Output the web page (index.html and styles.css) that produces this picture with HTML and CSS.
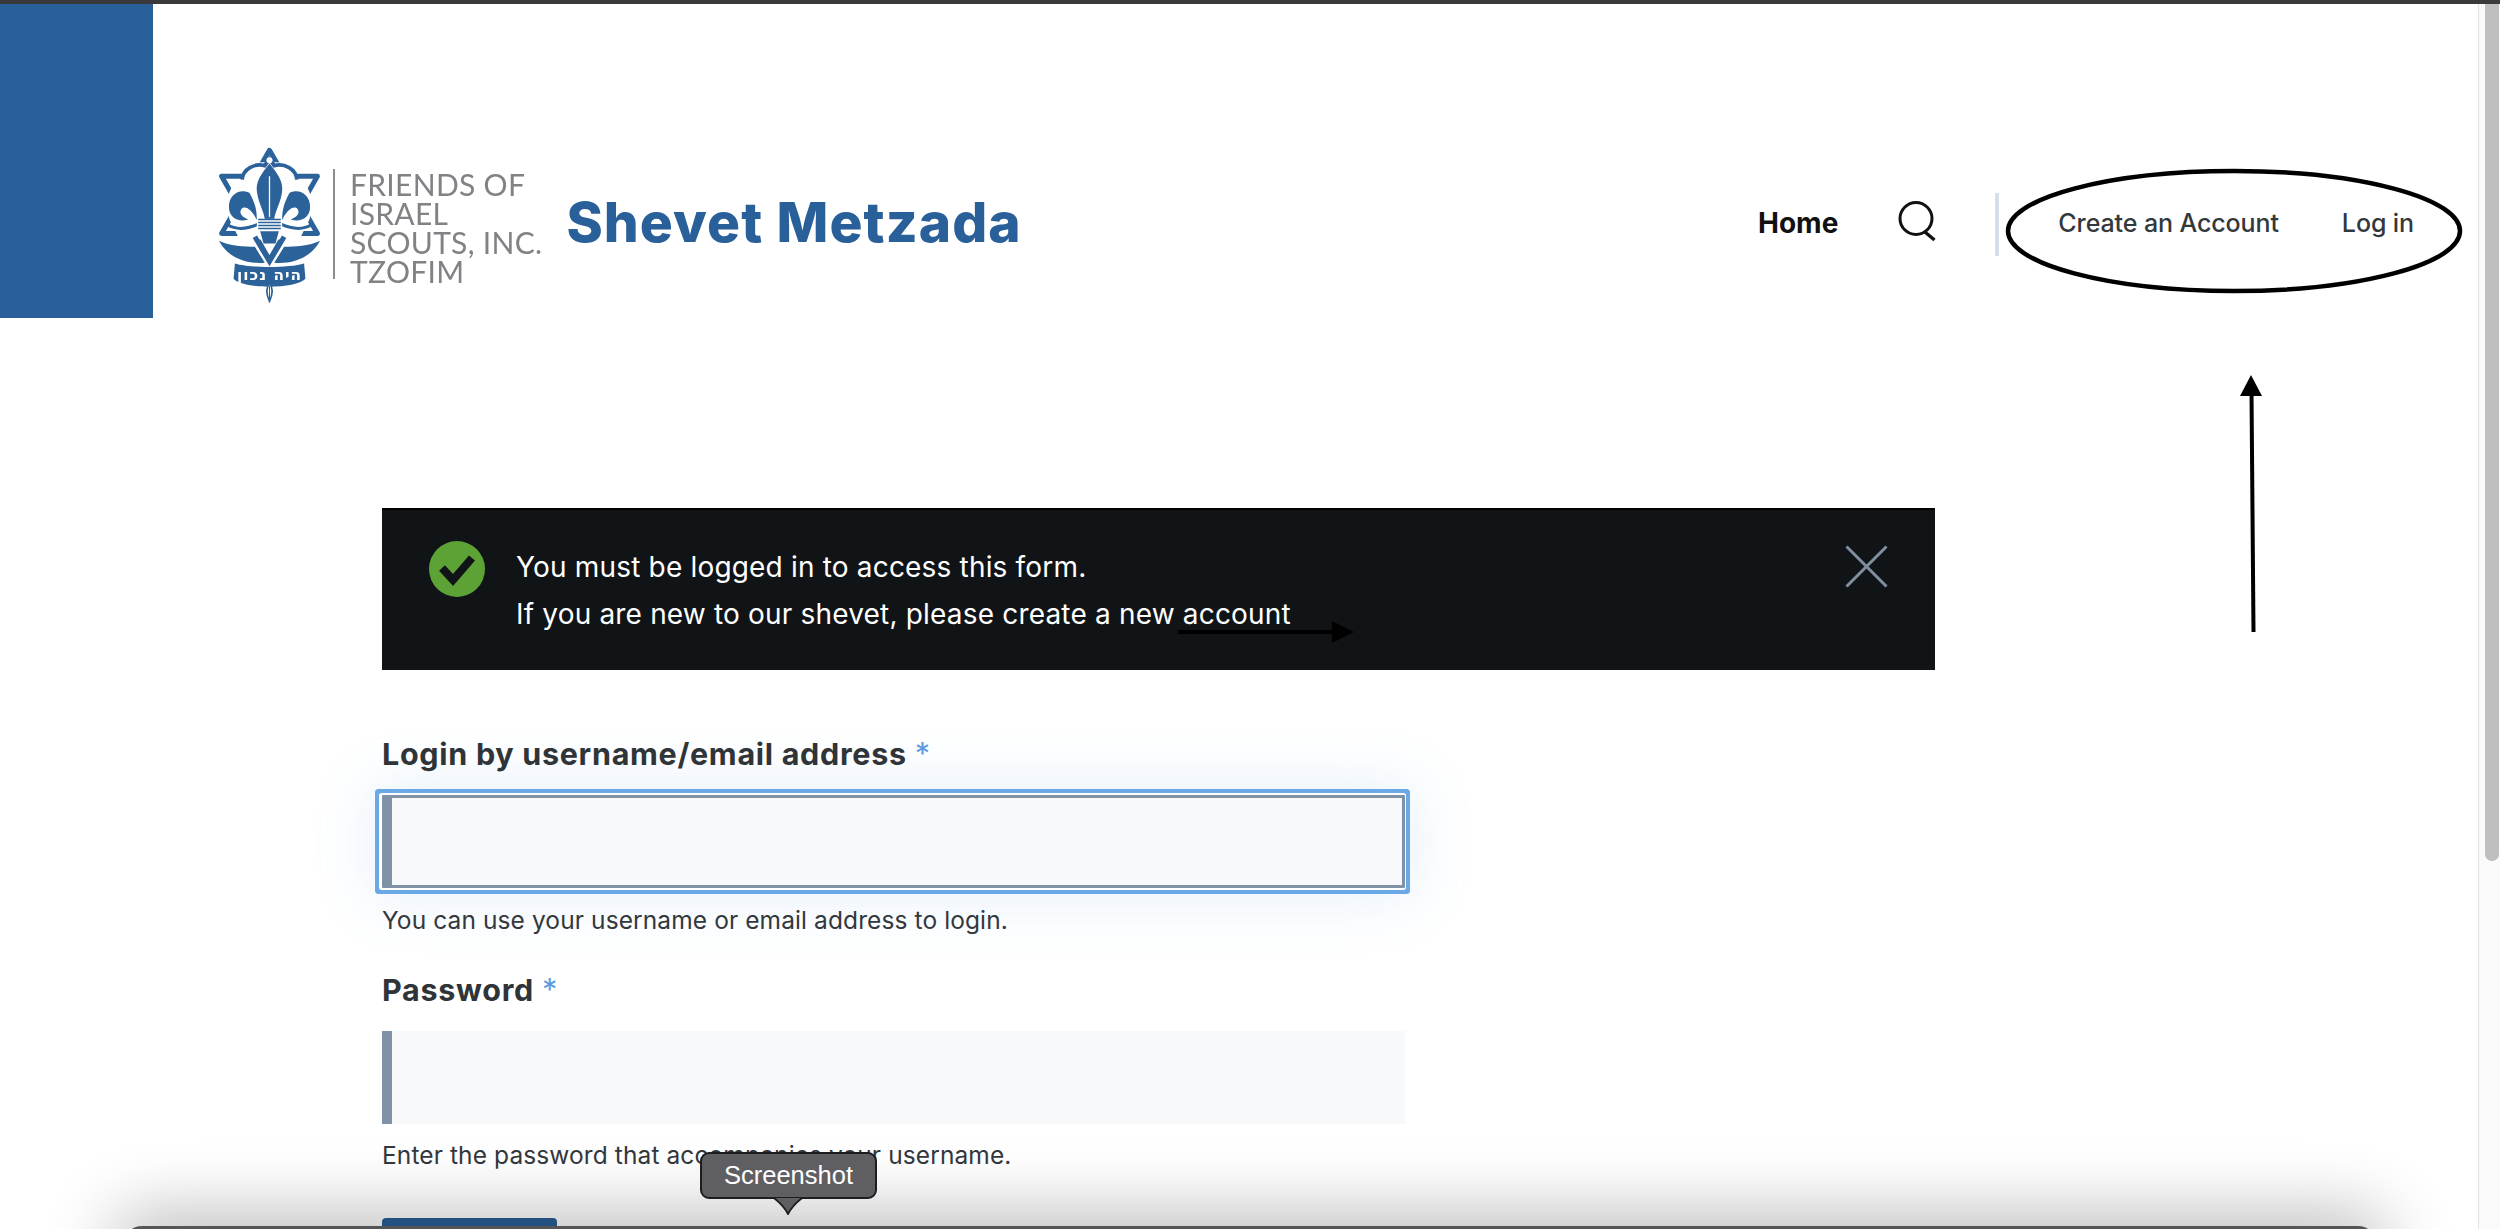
FILE: index.html
```html
<!DOCTYPE html>
<html lang="en">
<head>
<meta charset="utf-8">
<title>Shevet Metzada</title>
<link rel="stylesheet" href="styles.css">
</head>
<body>
<div class="topbar"></div>
<div class="viewport">
  <main class="page">
    <header class="header">
      <div class="corner"></div>
      <a class="brand" href="#">
        <svg class="emblem" viewBox="50 40 320 490" aria-hidden="true">
          <g fill="none" stroke="#2b6299" stroke-width="15" stroke-linejoin="round">
            <path d="M210 62 L354 312 H66 Z"/>
            <path d="M66 140 H354 L210 392 Z"/>
          </g>
          <path d="M125 150 C125 110 165 92 210 100 C255 92 295 110 295 150 C335 165 345 220 330 270 L300 330 H120 L90 270 C75 220 85 165 125 150 Z" fill="#fff"/>
          <path d="M128 150 C130 118 165 100 196 108 L210 88 L224 108 C255 100 290 118 292 150" fill="none" stroke="#2b6299" stroke-width="11"/>
          <circle cx="210" cy="92" r="9" fill="#fff"/>
          <path d="M210 102 C232 130 252 155 248 185 C244 220 226 245 224 272 H196 C194 245 176 220 172 185 C168 155 188 130 210 102 Z" fill="#2b6299"/>
          <path d="M210 140 V262" stroke="#fff" stroke-width="4"/>
          <path d="M172 272 C172 250 170 225 150 190 C120 176 88 195 88 232 C88 266 118 280 146 270 C130 264 116 252 126 238 C136 226 158 240 172 272 Z" fill="#2b6299"/>
          <path d="M248 272 C248 250 250 225 270 190 C300 176 332 195 332 232 C332 266 302 280 274 270 C290 264 304 252 294 238 C284 226 262 240 248 272 Z" fill="#2b6299"/>
          <path d="M84 286 C110 302 140 300 176 284 M336 286 C310 302 280 300 244 284" fill="none" stroke="#2b6299" stroke-width="9"/>
          <path d="M172 268 H248 V306 H172 Z" fill="#fff"/>
          <path d="M176 270 H244 M176 279 H244 M176 288 H244 M176 297 H244" stroke="#2b6299" stroke-width="4"/>
          <path d="M182 305 H238 L228 342 H192 Z" fill="#2b6299"/>
          <path d="M166 322 L210 396 L254 322" fill="none" stroke="#2b6299" stroke-width="15"/>
          <path d="M58 334 C90 350 135 352 166 352 L196 400 C150 404 90 392 58 334 Z" fill="#2b6299"/>
          <path d="M362 334 C330 350 285 352 254 352 L224 400 C270 404 330 392 362 334 Z" fill="#2b6299"/>
          <path d="M106 402 C150 416 270 416 314 402 L318 448 C290 480 130 480 102 448 Z" fill="#2b6299"/>
          <text class="emblem-motto" x="210" y="452" text-anchor="middle" direction="rtl">היה נכון</text>
          <path d="M210 462 C222 476 220 494 210 516 C200 494 198 476 210 462 Z" fill="#fff" stroke="#2b6299" stroke-width="5"/>
          <path d="M210 470 V510" stroke="#2b6299" stroke-width="3"/>
        </svg>
        <span class="brand-rule"></span>
        <span class="wordmark">
          <span>FRIENDS OF</span>
          <span>ISRAEL</span>
          <span>SCOUTS, INC.</span>
          <span>TZOFIM</span>
        </span>
        <span class="site-name">Shevet Metzada</span>
      </a>
      <nav class="nav">
        <a class="nav-home" href="#">Home</a>
        <svg class="search-icon" viewBox="0 0 38 40" aria-hidden="true">
          <circle cx="18" cy="17.5" r="16" fill="none" stroke="#111" stroke-width="3"/>
          <path d="M27 31 L36.5 39" stroke="#111" stroke-width="3.4" fill="none"/>
        </svg>
        <span class="nav-rule"></span>
        <a class="nav-link nav-create" href="#">Create an Account</a>
        <a class="nav-link" href="#">Log in</a>
      </nav>
    </header>

    <section class="content">
      <div class="alert">
        <svg class="alert-check" viewBox="0 0 56 56" aria-hidden="true">
          <circle cx="28" cy="28" r="28" fill="#5da235"/>
          <path d="M13 27 L24 39 L43 17" fill="none" stroke="#101417" stroke-width="8"/>
        </svg>
        <div class="alert-text">
          <p>You must be logged in to access this form.</p>
          <p>If you are new to our shevet, please create a new account</p>
        </div>
        <svg class="alert-close" viewBox="0 0 43 43" aria-hidden="true">
          <path d="M1.5 1.5 L41.5 41.5 M41.5 1.5 L1.5 41.5" stroke="#7f8f9f" stroke-width="3" fill="none"/>
        </svg>
      </div>

      <form class="form">
        <div class="field field-first">
          <label class="label" for="user">Login by username/email address <span class="req">*</span></label>
          <input class="input input-focus" id="user" type="text">
          <p class="help">You can use your username or email address to login.</p>
        </div>
        <div class="field field-second">
          <label class="label" for="pass">Password <span class="req">*</span></label>
          <input class="input" id="pass" type="password">
          <p class="help">Enter the password that accompanies your username.</p>
        </div>
        <button class="submit" type="button"></button>
      </form>
    </section>
  </main>
  <aside class="scrollbar"><div class="scroll-thumb"></div></aside>
</div>

<svg class="annotations" viewBox="0 0 2500 1229" aria-hidden="true">
  <ellipse cx="2234" cy="231" rx="226" ry="60" fill="none" stroke="#000" stroke-width="4.5"/>
  <path d="M2253.5 632 L2251.5 392" stroke="#000" stroke-width="4" fill="none"/>
  <path d="M2251 375 L2262 396 H2240 Z" fill="#000"/>
  <path d="M1178 632 H1336" stroke="#000" stroke-width="4" fill="none"/>
  <path d="M1354 632 L1332 621 V643 Z" fill="#000"/>
</svg>

<div class="dock"></div>
<div class="tooltip">Screenshot
  <svg class="tooltip-tail" viewBox="0 0 32 18" aria-hidden="true">
    <path d="M1 1 H31 C25 5 20 9 16 17 C12 9 7 5 1 1 Z" fill="#5f5e62"/>
    <path d="M0 1 H2 C7 5 12 9 16 17 C20 9 25 5 30 1 H32" fill="none" stroke="#1d1d1f" stroke-width="1.8"/>
  </svg>
</div>
</body>
</html>
```
FILE: styles.css
```css
* { box-sizing: border-box; }

html, body {
  margin: 0;
  height: 1229px;
  overflow: hidden;
  background: #fff;
}

body {
  position: relative;
  font-family: Inter, "Liberation Sans", sans-serif;
  color: #33383d;
}

a { text-decoration: none; color: inherit; }
p { margin: 0; }

.topbar {
  height: 4px;
  background: #3a3a3a;
}

.viewport {
  display: flex;
  height: 1225px;
}

.page {
  flex: 1;
  min-width: 0;
}

.header {
  display: flex;
  align-items: flex-start;
  height: 314px;
}

.corner {
  width: 153px;
  height: 314px;
  background: #2a6099;
}

.brand {
  display: flex;
  align-items: center;
  margin: 142px 0 0 63px;
  height: 156px;
}

.emblem {
  width: 107px;
  height: 163px;
  flex: none;
  filter: blur(0.4px);
}

.emblem-motto {
  font-family: "DejaVu Sans", sans-serif;
  font-size: 46px;
  font-weight: 700;
  letter-spacing: 3px;
  fill: #fff;
}

.brand-rule {
  width: 2px;
  height: 110px;
  margin: 0 15px 0 10px;
  background: #8a8c8e;
}

.wordmark {
  display: flex;
  flex-direction: column;
  margin-top: 7px;
  font-family: Lato, "Liberation Sans", sans-serif;
  font-size: 30px;
  font-weight: 400;
  letter-spacing: 0.3px;
  line-height: 29px;
  color: #808285;
  filter: blur(0.4px);
}

.site-name {
  margin: -4px 0 0 24px;
  font-size: 55px;
  font-weight: 800;
  letter-spacing: 1.1px;
  color: #2a6099;
  white-space: nowrap;
}

.nav {
  display: flex;
  align-items: center;
  margin: 189px 0 0 auto;
  padding-right: 64px;
  height: 63px;
}

.nav-home {
  font-size: 28px;
  font-weight: 700;
  color: #111;
  margin-right: 60px;
  margin-top: -4px;
}

.search-icon {
  width: 38px;
  height: 40px;
  margin-top: -8px;
}

.nav-rule {
  width: 4px;
  height: 63px;
  margin: 0 59px;
  background: #d5deea;
}

.nav-link {
  font-size: 25px;
  font-weight: 500;
  letter-spacing: -0.1px;
  color: #33383d;
  margin-top: -4px;
}

.nav-create { margin-right: 63px; }

.scrollbar {
  flex: none;
  width: 22px;
  padding-left: 6px;
  background: #fafafa;
  border-left: 1px solid #e4e4e4;
}

.scroll-thumb {
  width: 14px;
  height: 857px;
  border-radius: 0 0 7px 7px;
  background: #bfbfbf;
}

.content {
  width: 1553px;
  margin: 190px 0 0 382px;
}

.alert {
  display: flex;
  align-items: flex-start;
  height: 162px;
  padding: 31px 47px 0;
  background: #101417;
  border-top: 2px solid #000;
}

.alert-check {
  width: 56px;
  height: 56px;
  flex: none;
}

.alert-text {
  flex: 1;
  margin: 3px 0 0 31px;
  font-size: 28px;
  letter-spacing: 0.18px;
  line-height: 47px;
  color: #fff;
}

.alert-close {
  width: 43px;
  height: 43px;
  flex: none;
  margin-top: 4px;
}

.form {
  width: 1023px;
}

.field-first { margin-top: 62px; }
.field-second { margin-top: 30px; }

.label {
  display: block;
  font-size: 30.5px;
  font-weight: 700;
  letter-spacing: 0.7px;
  line-height: 44px;
  color: #2f3438;
}

.req {
  font-weight: 400;
  color: #5a9be0;
}

.input {
  display: block;
  width: 100%;
  height: 93px;
  margin: 0;
  padding: 0;
  background: #f8f9fb;
  border: 0;
  border-left: 10px solid #8093a6;
  border-radius: 0;
  outline: 0;
}

.input-focus {
  margin-top: 19px;
  border: 3px solid #8093a6;
  border-left-width: 10px;
  box-shadow:
    -1px 0 0 2px #fff,
    -1px 0 0 6px #6aa9e6,
    0 0 60px 10px rgba(106, 169, 230, 0.16);
  border-radius: 1px;
}

.field-second .input { margin-top: 19px; }

.help {
  margin-top: 14px;
  font-size: 24.5px;
  letter-spacing: 0.1px;
  line-height: 36px;
  color: #33383d;
}

.field-second .help { margin-top: 13px; }

.submit {
  display: block;
  width: 175px;
  height: 60px;
  margin: 45px 0 0;
  padding: 0;
  border: 0;
  border-radius: 4px;
  background: #2a6099;
}

.annotations {
  position: absolute;
  left: 0;
  top: 0;
  width: 2500px;
  height: 1229px;
  pointer-events: none;
}

.dock {
  position: absolute;
  left: 124px;
  top: 1226px;
  width: 2252px;
  height: 40px;
  border-radius: 18px 18px 0 0;
  background: #555;
  box-shadow: 0 0 70px 10px rgba(0, 0, 0, 0.3);
}

.tooltip {
  position: absolute;
  left: 700px;
  top: 1152px;
  width: 177px;
  height: 47px;
  display: flex;
  align-items: center;
  justify-content: center;
  font-family: "Liberation Sans", sans-serif;
  font-size: 25.5px;
  color: #fff;
  background: #5f5e62;
  border: 2px solid #1d1d1f;
  border-radius: 9px;
}

.tooltip-tail {
  position: absolute;
  left: 70px;
  top: 43px;
  width: 32px;
  height: 18px;
}
```
